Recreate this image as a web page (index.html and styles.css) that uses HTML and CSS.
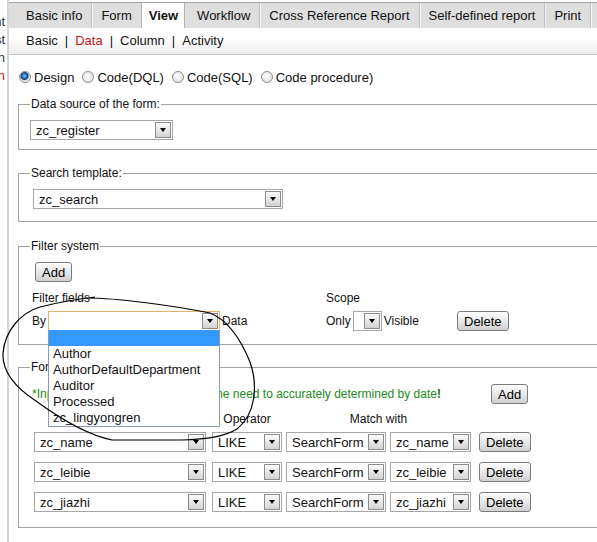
FILE: index.html
```html
<!DOCTYPE html>
<html lang="en">
<head>
  <meta charset="UTF-8" />
  <title>View - Data</title>
  <link rel="stylesheet" href="styles.css">
</head>
<body>
  <div class="side">
    <div>Document</div>
    <div>Object list</div>
    <div>Column design</div>
    <div class="cur">View design</div>
  </div>

  <div class="main">
    <ul class="tabs">
      <li>Basic info</li>
      <li>Form</li>
      <li class="on">View</li>
      <li>Workflow</li>
      <li>Cross Reference Report</li>
      <li>Self-defined report</li>
      <li>Print</li>
    </ul>

    <div class="subnav">
      <a>Basic</a><span class="bar">|</span><a class="cur">Data</a><span class="bar">|</span><a>Column</a><span class="bar">|</span><a>Activity</a>
    </div>

    <div class="modes">
      <label><input type="radio" name="mode" checked>Design</label>
      <label><input type="radio" name="mode">Code(DQL)</label>
      <label><input type="radio" name="mode">Code(SQL)</label>
      <label><input type="radio" name="mode">Code procedure)</label>
    </div>

    <fieldset class="fs-source">
      <legend>Data source of the form:</legend>
      <span class="combo w-src"><span class="val">zc_register</span><span class="arr"></span></span>
    </fieldset>

    <fieldset class="fs-tpl">
      <legend>Search template:</legend>
      <span class="combo w-tpl"><span class="val">zc_search</span><span class="arr"></span></span>
    </fieldset>

    <fieldset class="fs-filter">
      <legend>Filter system</legend>
      <button class="btn add">Add</button>
      <div class="fgrid">
        <span>Filter fields</span>
        <span>Scope</span>
        <span></span>
        <span class="line">By
          <span class="combo w-by focus"><span class="val"></span><span class="arr"></span>
            <div class="droplist">
              <div class="sel">&nbsp;</div>
              <div>Author</div>
              <div>AuthorDefaultDepartment</div>
              <div>Auditor</div>
              <div>Processed</div>
              <div>zc_lingyongren</div>
            </div>
          </span>
          Data</span>
        <span class="line">Only <span class="combo w-tiny"><span class="val"></span><span class="arr"></span></span> Visible</span>
        <span><button class="btn">Delete</button></span>
      </div>
    </fieldset>

    <fieldset class="fs-cond">
      <legend>Formula</legend>
      <div class="tip-row">
        <span class="tip">*Input condition of date field, the time need to accurately determined by date<b>!</b></span>
        <button class="btn">Add</button>
      </div>
      <div class="crow head">
        <span></span>
        <span class="c-op">Operator</span>
        <span class="c-match">Match with</span>
      </div>
      <div class="crow">
        <span class="combo w-field"><span class="val">zc_name</span><span class="arr"></span></span>
        <span class="combo w-op"><span class="val">LIKE</span><span class="arr"></span></span>
        <span class="combo w-from"><span class="val">SearchForm</span><span class="arr"></span></span>
        <span class="combo w-match"><span class="val">zc_name</span><span class="arr"></span></span>
        <button class="btn">Delete</button>
      </div>
      <div class="crow">
        <span class="combo w-field"><span class="val">zc_leibie</span><span class="arr"></span></span>
        <span class="combo w-op"><span class="val">LIKE</span><span class="arr"></span></span>
        <span class="combo w-from"><span class="val">SearchForm</span><span class="arr"></span></span>
        <span class="combo w-match"><span class="val">zc_leibie</span><span class="arr"></span></span>
        <button class="btn">Delete</button>
      </div>
      <div class="crow">
        <span class="combo w-field"><span class="val">zc_jiazhi</span><span class="arr"></span></span>
        <span class="combo w-op"><span class="val">LIKE</span><span class="arr"></span></span>
        <span class="combo w-from"><span class="val">SearchForm</span><span class="arr"></span></span>
        <span class="combo w-match"><span class="val">zc_jiazhi</span><span class="arr"></span></span>
        <button class="btn">Delete</button>
      </div>
    </fieldset>
  </div>

  <!-- pen loop drawn around the field list -->
  <svg class="mark" viewBox="0 0 597 542" width="597" height="542">
    <path d="M 88 298 C 115 298, 170 305, 210 313 C 228 320, 241 340, 250 362 C 258 385, 256 414, 237 429 C 224 437, 207 439, 182 440 L 112 440 C 88 435, 62 420, 36 401 C 13 386, 2 371, 3 353 C 5 331, 20 313, 40 307 C 60 302, 76 299, 95 297" fill="none" stroke="#000" stroke-width="1.2"/>
  </svg>
</body>
</html>
```

FILE: styles.css
```css
body {
  margin: 0;
  position: relative;
  display: flex;
  height: 542px;
  overflow: hidden;
  font-family: "Liberation Sans", Arial, sans-serif;
  font-size: 12px;
  color: #111;
  background: #fff;
}
.side {
  flex: 0 0 9px;
  box-sizing: border-box;
  padding: 13px 2px 0 0;
  overflow: hidden;
  direction: rtl;
  white-space: nowrap;
  font-size: 13px;
  line-height: 18px;
  color: #333;
  border-right: 2px solid #d6d6d6;
}
.side .cur {
  color: #c8161d;
}
.main {
  flex: 0 0 620px;
}
.tabs {
  display: flex;
  margin: 2px 0 0;
  padding: 0 0 0 8px;
  list-style: none;
  height: 25px;
  border-top: 1px solid #a3a3a3;
  background: #dedede;
  font-size: 13px;
  line-height: 25px;
}
.tabs li {
  padding: 0 9px;
  white-space: nowrap;
  border-right: 1px solid #c2c2c2;
  box-shadow: 1px 0 0 #f3f3f3;
}
.tabs li.on {
  margin: 0 3px 0 -1px;
  padding: 0 6px 0 7px;
  background: #fff;
  border-left: 1px solid #b4b4b4;
  border-right-color: #b4b4b4;
  box-shadow: none;
  font-weight: bold;
}
.subnav {
  height: 26px;
  padding-left: 17px;
  line-height: 26px;
  font-size: 13px;
  background: linear-gradient(#fff 40%, #ececec);
  border-bottom: 1px solid #c6c6c6;
}
.subnav .cur {
  color: #c8161d;
}
.subnav .bar {
  margin: 0 7px;
}
.modes {
  display: flex;
  align-items: center;
  height: 16px;
  padding: 14px 0 0 10px;
  font-size: 13px;
}
.modes label {
  display: flex;
  align-items: center;
  margin-right: 8px;
}
.modes input {
  appearance: none;
  width: 12px;
  height: 12px;
  margin: 0 3px 0 0;
  border: 1px solid #8e8e8e;
  border-radius: 50%;
  background: radial-gradient(circle at 45% 40%, #fff, #d8d8d8);
}
.modes input:checked {
  background: radial-gradient(circle at 45% 40%, #8fd0ff 0, #2a7cc4 2px, #0f3f78 3.5px, #dcdcdc 4.5px, #fff);
}
fieldset {
  margin: 12px 0 0 9px;
  padding: 9px 11px;
  border: 1px solid #a2a2a2;
  min-width: 0;
}
legend {
  padding: 0 1px;
  font-size: 12px;
  line-height: 14px;
}
.fs-tpl {
  margin-top: 16px;
  padding-bottom: 12px;
}
.fs-filter {
  margin-top: 17px;
  padding: 9px 11px 13px;
}
.fs-cond {
  margin-top: 15px;
  padding: 10px 11px 15px;
}

/* fake select boxes */
.combo {
  position: relative;
  display: inline-flex;
  align-items: center;
  height: 20px;
  box-sizing: border-box;
  border: 1px solid #a6a6a6;
  background: #fff;
  font-size: 13px;
  vertical-align: middle;
}
.combo.focus {
  border-color: #e0b56c;
}
.combo .val {
  flex: 1;
  padding-left: 5px;
  white-space: nowrap;
  overflow: hidden;
}
.combo .arr {
  display: flex;
  align-items: center;
  justify-content: center;
  width: 16px;
  height: 16px;
  margin-right: 1px;
  box-sizing: border-box;
  border: 1px solid #8c8c8c;
  background: linear-gradient(#fbfbfb, #d3d3d3);
}
.combo .arr::before {
  content: "";
  border-top: 4px solid #000;
  border-left: 3.5px solid transparent;
  border-right: 3.5px solid transparent;
}
.w-src { width: 143px; }
.w-tpl { width: 250px; margin-left: 3px; }
.w-by { width: 172px; }
.w-tiny { width: 29px; }
.w-field { width: 172px; }
.w-op { width: 70px; }
.w-from { width: 100px; }
.w-match { width: 81px; }

.droplist {
  position: absolute;
  top: 100%;
  left: -1px;
  right: -1px;
  z-index: 5;
  border: 1px solid #8a9cad;
  border-top: none;
  background: #fff;
  line-height: 16px;
}
.droplist div {
  padding-left: 4px;
  white-space: nowrap;
}
.droplist .sel {
  background: #3399ff;
}

.btn {
  height: 20px;
  padding: 0 6px;
  font: 13px "Liberation Sans", Arial, sans-serif;
  color: #000;
  border: 1px solid #7c7c7c;
  border-radius: 3px;
  background: linear-gradient(#fefefe, #e6e6e6 55%, #d0d0d0);
}
.add {
  margin-left: 5px;
}
.fgrid {
  display: grid;
  grid-template-columns: 294px 131px auto;
  grid-template-rows: 14px 20px;
  row-gap: 6px;
  align-items: center;
  margin-top: 9px;
  padding-left: 2px;
  line-height: 14px;
}
.fgrid .line {
  display: flex;
  align-items: center;
  gap: 2px;
}
.tip-row {
  display: grid;
  grid-template-columns: 459px auto;
  align-items: center;
  justify-items: start;
  height: 20px;
  padding-left: 2px;
}
.tip {
  color: #218a21;
  white-space: nowrap;
}
.tip b {
  color: #137013;
}
.crow {
  display: grid;
  grid-template-columns: 178px 74px 104px 89px auto;
  align-items: center;
  justify-items: start;
  margin: 10px 0 0 4px;
}
.crow.head {
  margin-top: 8px;
  line-height: 14px;
}
.crow.head + .crow {
  margin-top: 6px;
}
.c-op {
  width: 70px;
  text-align: center;
}
.c-match {
  grid-column: span 2;
  width: 185px;
  text-align: center;
}
.mark {
  position: absolute;
  top: 0;
  left: 0;
  z-index: 10;
  pointer-events: none;
}
```
